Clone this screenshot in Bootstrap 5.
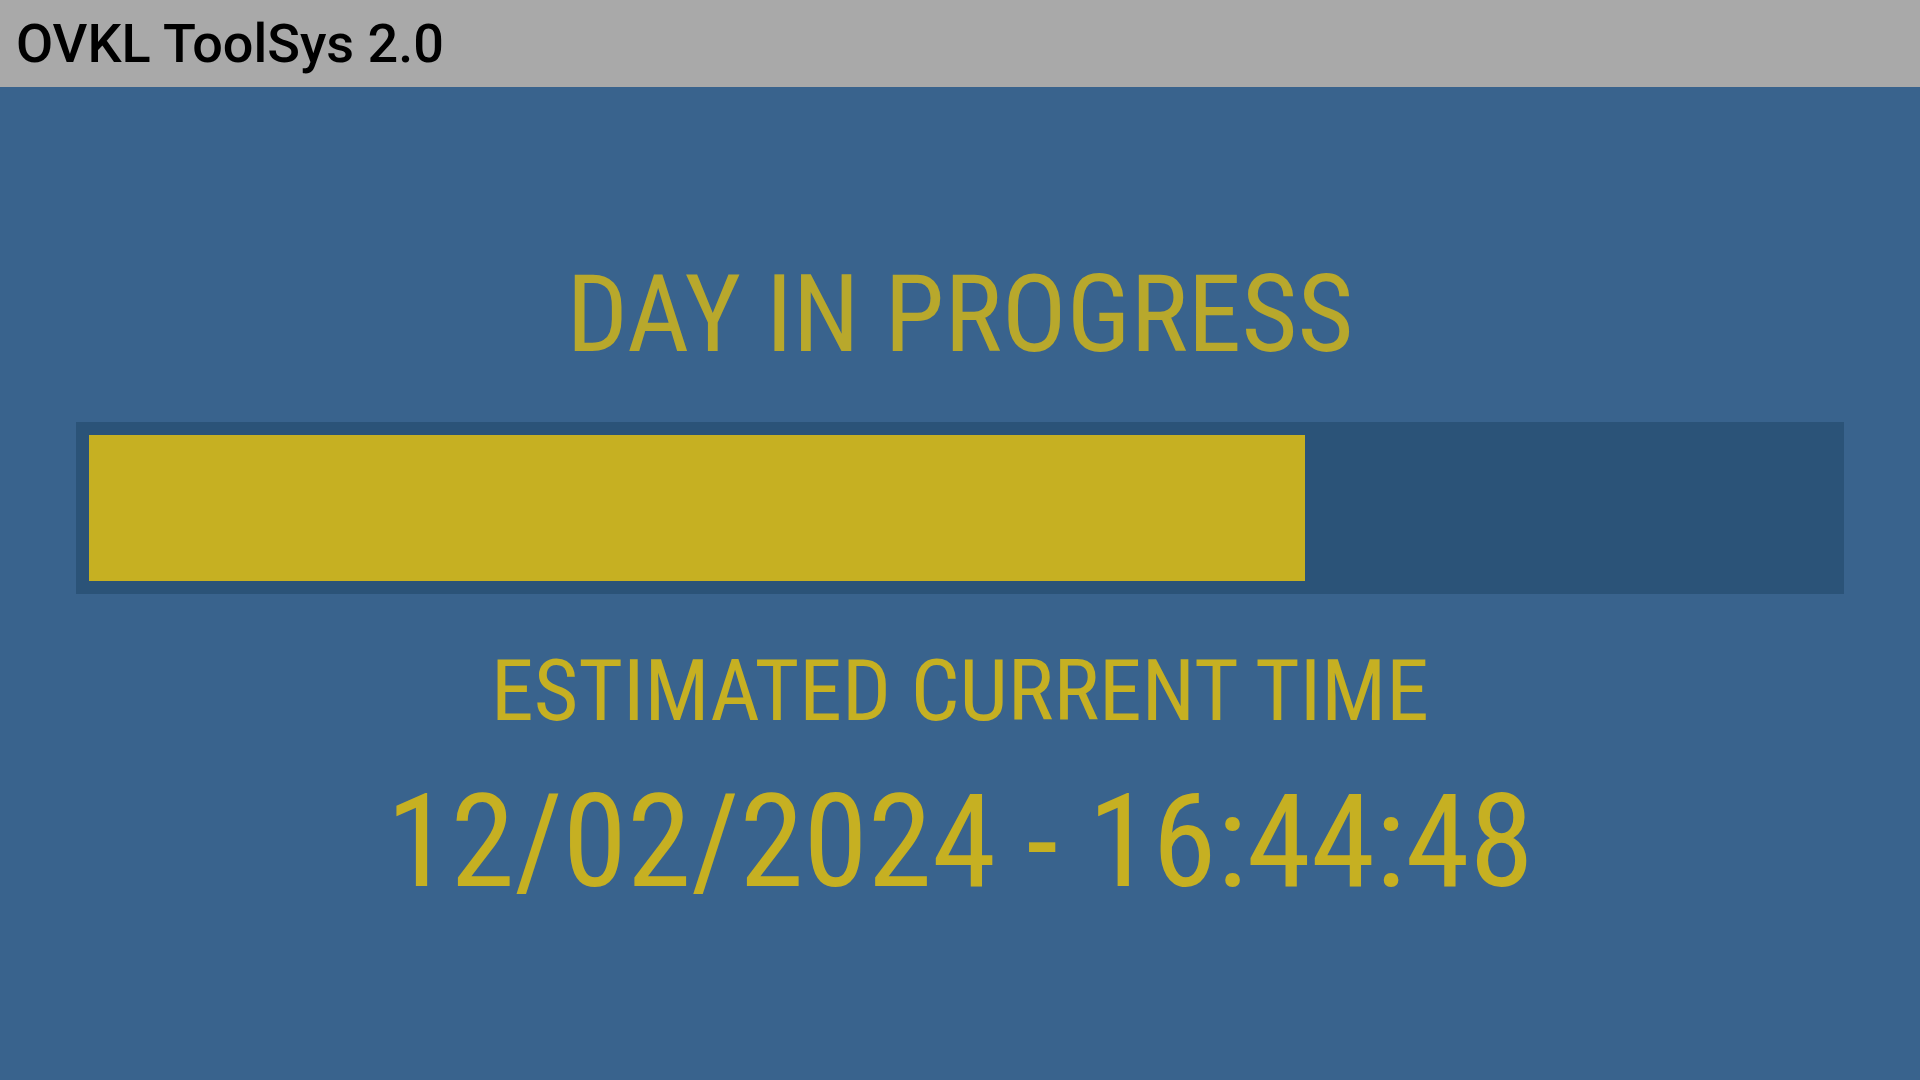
<!DOCTYPE html>
<html lang="en">
<head>
<meta charset="utf-8">
<meta name="viewport" content="width=device-width, initial-scale=1">
<title>OVKL ToolSys 2.0</title>
<link href="https://cdn.jsdelivr.net/npm/bootstrap@5.3.0/dist/css/bootstrap.min.css" rel="stylesheet">
<style>
body { background: #39638d; color: #c6b022; font-family: "Roboto Condensed", Roboto, sans-serif; }
.topbar { background: #a9a9a9; height: 87px; }
.topbar-title { font-family: Roboto, sans-serif; font-weight: 500; font-size: 54px; color: #000; }
.day-panel { padding: 6px 76px 0; }
.day-title { font-size: 108px; line-height: 120px; opacity: .9; }
.day-track { height: 172px; padding: 13px; background: #2b5378; border-radius: 0; }
.day-fill { background: #c6b022; }
.est-title { font-size: 86px; line-height: 98px; }
.est-time { font-size: 130px; line-height: 156px; }
</style>
</head>
<body class="d-flex flex-column min-vh-100">
<header class="navbar topbar p-0 px-3"><span class="topbar-title">OVKL ToolSys 2.0</span></header>
<main class="day-panel flex-grow-1 d-flex flex-column align-items-center justify-content-center text-center">
<h1 class="day-title fw-normal mb-5">DAY IN PROGRESS</h1>
<div class="progress day-track w-100 mb-5" role="progressbar" aria-label="Day in progress" aria-valuenow="70" aria-valuemin="0" aria-valuemax="100"><div class="progress-bar day-fill" style="width: 69.8%"></div></div>
<h2 class="est-title fw-normal mb-4">ESTIMATED CURRENT TIME</h2>
<time class="est-time" datetime="2024-02-12T16:44:48">12/02/2024 - 16:44:48</time>
</main>
<script src="https://cdn.jsdelivr.net/npm/bootstrap@5.3.0/dist/js/bootstrap.bundle.min.js"></script>
</body>
</html>
